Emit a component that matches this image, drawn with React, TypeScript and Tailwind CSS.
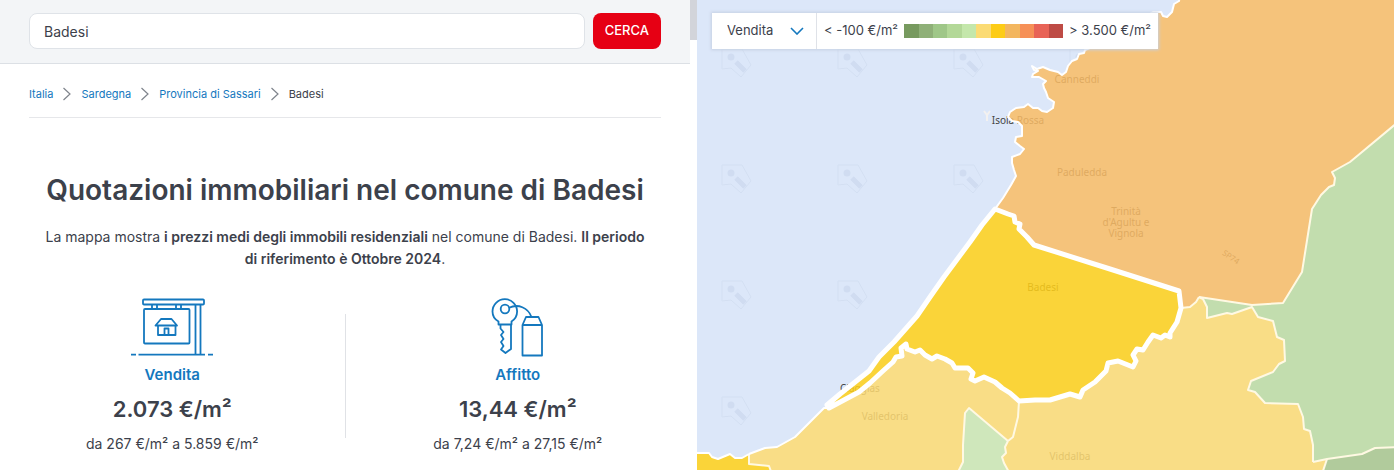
import { useState } from "react";
import type { FormEvent, ReactNode } from "react";

// Shared borders, as "x,y" points in map units
const TRINITA_COAST =
  "1180,-4 1179,1 1174,4 1172,12 1167,17 1163,16 1161,12 1153,12 1140,20 1120,32 1100,44 1085,50 1084,53 1079,54 1077,59 1072,61 1068,66 1066,72 1062,75 1058,72 1050,70 1043,67 1037,69 1032,66 1034,70 1038,71 1033,74 1032,77 1039,77 1046,81 1043,84 1044,88 1046,92 1048,98 1054,102 1053,108 1047,112 1042,111 1038,108 1033,108 1028,104 1024,107 1016,108 1010,112 1008,117 1012,121 1018,122 1022,126 1022,136 1016,137 1015,142 1020,146 1024,149 1020,154 1012,157 1012,163 1014,170 1016,176 1011,185 1003,198 995,209";
const BADESI_NORTH =
  "995,209 1008,214 1014,216 1015,222 1020,224 1019,229 1027,237 1034,245 1110,269 1179,291 1181,308";
const BADESI_EAST =
  "1181,308 1177,322 1170,333 1170,337 1165,335 1161,338 1153,335 1148,342 1143,350 1137,349 1133,355 1136,361 1133,367 1118,361 1108,363 1106,371 1095,382 1083,390 1080,397 1070,394 1050,400 1035,400 1019,401";
const BADESI_SOUTH =
  "1019,401 1010,393 1002,388 995,382 984,377 975,381 971,379 973,373 968,368 955,368 952,363 945,359 937,356 932,359 925,355 920,350 915,352 907,349 906,344 901,348 902,356 896,357 893,362 884,370 870,383 859,392 829,408";
const BADESI_COAST =
  "829,408 827,405 840,394 869,371 879,357 894,342 917,316 930,297 944,277 970,242 982,225 995,209";
const VALLEDORIA_COAST = "829,408 824,408 795,437 777,447 765,448 749,454";
const VALLEDORIA_WEST = "749,454 749,464 769,466 772,474";
const WEST_COAST = "693,453 709,453 712,457 718,459 730,454 735,458 742,458 749,454";
const VALLEDORIA_EAST = "1019,401 1018,417 1013,437 1008,441";
const SANTA_MARIA_EAST = "1008,441 1005,447 1006,453 1002,457 1004,463 1010,474";
const SANTA_MARIA_NORTH = "957,474 963,462 963,445 965,413 969,408 1008,441";
const TRINITA_SOUTH = "1181,308 1190,307 1196,302 1199,297";
const TRINITA_EAST =
  "1199,297 1252,305 1283,303 1302,272 1312,209 1321,195 1329,187 1334,185 1335,178 1332,172 1350,162 1398,122";
const VIDDALBA_EAST =
  "1199,297 1203,299 1207,307 1207,318 1227,313 1232,314 1252,307 1258,317 1273,321 1277,337 1284,340 1285,361 1279,364 1273,372 1251,381 1248,390 1255,392 1265,403 1298,404 1303,417 1304,429 1310,431 1313,445 1313,462";
const AGGIUS_SOUTH = "1313,462 1327,459 1362,454 1375,448 1398,447";

const reverse = (points: string) => points.split(" ").reverse().join(" ");

const regions = [
  {
    name: "Trinità d'Agultu e Vignola",
    fill: "#f9bc65",
    points: [TRINITA_COAST, BADESI_NORTH, TRINITA_SOUTH, TRINITA_EAST, "1398,-4"],
  },
  {
    name: "Aggius",
    fill: "#bddaa1",
    points: [reverse(TRINITA_EAST), VIDDALBA_EAST, AGGIUS_SOUTH],
  },
  {
    name: "Viddalba",
    fill: "#fedb72",
    points: [
      reverse(TRINITA_SOUTH),
      BADESI_EAST,
      VALLEDORIA_EAST,
      SANTA_MARIA_EAST,
      "1322,474 1327,459",
      reverse(VIDDALBA_EAST),
    ],
  },
  {
    name: "Valledoria",
    fill: "#fedb72",
    points: [
      BADESI_SOUTH,
      VALLEDORIA_COAST,
      VALLEDORIA_WEST,
      SANTA_MARIA_NORTH,
      reverse(VALLEDORIA_EAST),
    ],
  },
  {
    name: "Santa Maria Coghinas",
    fill: "#cde6b0",
    points: [SANTA_MARIA_NORTH, SANTA_MARIA_EAST],
  },
  {
    name: "Castelsardo",
    fill: "#ffd018",
    points: [WEST_COAST, VALLEDORIA_WEST, "693,474"],
  },
  {
    name: "Bortigiadas",
    fill: "#a9c68c",
    points: ["1322,474 1327,459 1362,454 1375,448 1398,447 1398,474"],
  },
  {
    name: "Badesi",
    fill: "#ffd018",
    points: [BADESI_NORTH, BADESI_EAST, BADESI_SOUTH, BADESI_COAST],
  },
];

const innerBorders = [
  TRINITA_SOUTH,
  TRINITA_EAST,
  VIDDALBA_EAST,
  AGGIUS_SOUTH,
  VALLEDORIA_EAST,
  SANTA_MARIA_EAST,
  SANTA_MARIA_NORTH,
  VALLEDORIA_WEST,
  "1327,459 1322,474",
];

const places = [
  { name: "Canneddi", x: 1077, y: 83 },
  { name: "Isola Rossa", x: 1018, y: 124 },
  { name: "Paduledda", x: 1082, y: 176 },
  { name: "Trinità", x: 1126, y: 215 },
  { name: "d'Agultu e", x: 1126, y: 226 },
  { name: "Vignola", x: 1126, y: 237 },
  { name: "Badesi", x: 1043, y: 291 },
  { name: "Ciaggias", x: 860, y: 392 },
  { name: "Valledoria", x: 885, y: 420 },
  { name: "Viddalba", x: 1070, y: 460 },
];

const legendColors = [
  "bg-[#779a5f]",
  "bg-[#8fb078]",
  "bg-[#9fc788]",
  "bg-[#b3d898]",
  "bg-[#c4e7ab]",
  "bg-[#fbdb74]",
  "bg-[#fdcc16]",
  "bg-[#f3b65f]",
  "bg-[#f69057]",
  "bg-[#e86357]",
  "bg-[#be4b45]",
];

const crumbs = ["Italia", "Sardegna", "Provincia di Sassari"];

function SaleIcon() {
  return (
    <svg
      className="h-[60px] w-[84px]"
      viewBox="0 0 84 60"
      fill="none"
      stroke="#1478be"
      strokeWidth="1.8"
      strokeLinejoin="round"
      aria-hidden="true"
    >
      <rect x="13" y="1.5" width="61" height="5" rx="1" />
      <path d="M22 6.5v4.5M27 6.5v4.5M46 6.5v4.5M51 6.5v4.5M65.500 6.500v50M70.500 6.500v50" />
      <rect x="14" y="11" width="45.500" height="34.500" rx="1" />
      <path d="M25.500 27.500l5.500-6.500h10.500l5.500 6.500zM28 27.500v9.500h17.500v-9.500M34.500 37v-6.500h4V37" />
      <path d="M1 56.700h5M8.500 56.700h66.500M78 56.700h5" />
    </svg>
  );
}

function RentIcon() {
  return (
    <svg
      className="h-[60px] w-[54px]"
      viewBox="0 0 54 60"
      fill="none"
      stroke="#1478be"
      strokeWidth="1.8"
      strokeLinejoin="round"
      aria-hidden="true"
    >
      <path d="M7.500 26.500v-3C4 21.500 1.500 18 1.500 13.500a12.300 12.300 0 0 1 24.600 0c0 4.500-2.500 8-5.600 10v3z" />
      <circle cx="14" cy="11" r="4.300" />
      <path d="M18 9.800C27 5.500 37 9.500 40.500 19" />
      <path d="M9.500 26.500v4l3 3.500-2.500 3 2.500 4-2.500 3 2.500 4-2.500 3.500 4.500 3.500 5.500-4V26.500" />
      <path d="M31.500 27l3.500-8h12.500l3.500 8v30.500H31.500zM31.500 27H51" />
    </svg>
  );
}

function Breadcrumbs() {
  return (
    <nav aria-label="breadcrumb" className="border-b border-[#e6e7ea] pt-5 pb-[13px]">
      <ol className="flex items-center text-[11px] leading-5">
        {crumbs.map((crumb) => (
          <li key={crumb} className="flex items-center">
            <a href="#" className="text-[#1478be]">
              {crumb}
            </a>
            <svg
              className="mx-2.5 h-3.5 w-2"
              viewBox="0 0 8 14"
              fill="none"
              stroke="#7f848c"
              strokeWidth="1.2"
              aria-hidden="true"
            >
              <path d="M.5 1l6.500 6-6.500 6" />
            </svg>
          </li>
        ))}
        <li aria-current="page">Badesi</li>
      </ol>
    </nav>
  );
}

interface PriceCardProps {
  icon: ReactNode;
  label: string;
  price: string;
  range: string;
}

function PriceCard({ icon, label, price, range }: PriceCardProps) {
  return (
    <div className="flex flex-1 flex-col items-center">
      {icon}
      <a href="#" className="mt-[5px] text-[15px] leading-6 font-semibold text-[#1478be]">
        {label}
      </a>
      <p className="mt-1.5 text-[22px] leading-8 font-semibold">{price}</p>
      <p className="mt-[7px] text-sm leading-6">{range}</p>
    </div>
  );
}

function PriceMap() {
  return (
    <svg
      className="absolute inset-0 h-full w-full"
      viewBox="697 0 697 470"
      preserveAspectRatio="xMidYMid slice"
      role="img"
      aria-label="Mappa dei prezzi"
    >
      <defs>
        <pattern id="watermark" x="721" y="48" width="116" height="116" patternUnits="userSpaceOnUse">
          <path d="M1 1h20l9 16-10 12-10-9-9 1z" fill="none" stroke="#d3dff2" />
          <circle cx="10" cy="9" r="3.500" fill="#d0dcf1" />
          <path d="M15 14l9 9" stroke="#d0dcf1" strokeWidth="5" />
        </pattern>
      </defs>
      <rect x="697" y="0" width="697" height="470" fill="#dce7f9" />
      <rect x="697" y="0" width="697" height="470" fill="url(#watermark)" />
      <path d="M984 111l3 4 3-4M987 115v6" fill="none" stroke="#f3f1f0" strokeWidth="2" />

      {/* Plain land, so the watermark only shows on the sea */}
      {regions.map(({ name, points }) => (
        <polygon key={name} points={points.join(" ")} fill="#dce7f9" />
      ))}

      <g className="font-['Noto_Sans',sans-serif] text-[10px]" fill="#444444" textAnchor="middle">
        {places.map(({ name, x, y }) => (
          <text key={name} x={x} y={y}>
            {name}
          </text>
        ))}
        <text x="1231" y="260" className="text-[8px]" transform="rotate(34 1231 257)">
          SP74
        </text>
      </g>

      {regions.map(({ name, fill, points }) => (
        <polygon key={name} points={points.join(" ")} fill={fill} fillOpacity="0.85" />
      ))}

      <g fill="none" strokeLinejoin="round">
        {innerBorders.map((points) => (
          <polyline key={points} points={points} stroke="#fff9e3" strokeWidth="2" />
        ))}
        {[TRINITA_COAST, VALLEDORIA_COAST, WEST_COAST].map((points) => (
          <polyline key={points} points={points} stroke="#ffffff" strokeWidth="2" />
        ))}
        <polygon
          points={[BADESI_NORTH, BADESI_EAST, BADESI_SOUTH, BADESI_COAST].join(" ")}
          stroke="#ffffff"
          strokeWidth="5"
        />
      </g>
    </svg>
  );
}

function MapLegend() {
  return (
    <div className="absolute top-[13px] left-[15px] flex h-9 items-center bg-white text-[13px] shadow-[0_0_3px_1px_#c6d0e2]">
      <div className="relative h-full border-r border-[#dfe2e8]">
        <select
          aria-label="Contratto"
          className="h-full w-[104px] cursor-pointer appearance-none bg-transparent pl-[15px]"
        >
          <option>Vendita</option>
          <option>Affitto</option>
        </select>
        <svg
          className="pointer-events-none absolute top-3.5 right-3 h-2 w-3.5"
          viewBox="0 0 14 8"
          fill="none"
          stroke="#1478be"
          strokeWidth="1.6"
          aria-hidden="true"
        >
          <path d="M1 1l6 6 6-6" />
        </svg>
      </div>
      <div className="flex items-center gap-1.5 px-[7px] whitespace-nowrap">
        <span>&lt; -100 €/m²</span>
        <div className="flex h-3.5 w-[159px]">
          {legendColors.map((color) => (
            <span key={color} className={`flex-1 ${color}`} />
          ))}
        </div>
        <span>&gt; 3.500 €/m²</span>
      </div>
    </div>
  );
}

function App() {
  const [search, setSearch] = useState("Badesi");

  const handleSubmit = (e: FormEvent) => {
    e.preventDefault();
  };

  return (
    <div className="flex min-h-screen bg-white font-[Inter,sans-serif] text-[#3c414b]">
      <div className="flex w-1/2">
        <main className="min-w-0 flex-1">
          <form
            onSubmit={handleSubmit}
            className="flex gap-2 border-b border-[#dce0e5] bg-[#f3f5f7] px-[29px] pt-[13px] pb-3.5"
          >
            <input
              type="text"
              aria-label="Cerca comune"
              value={search}
              onChange={(e) => setSearch(e.target.value)}
              className="h-9 min-w-0 flex-1 rounded-lg border border-[#dfe3e8] bg-white px-3.5 text-sm"
            />
            <button
              type="submit"
              className="h-9 rounded-lg bg-[#e60014] px-3 text-[13px] font-medium text-white"
            >
              CERCA
            </button>
          </form>

          <div className="px-[29px]">
            <Breadcrumbs />
            <h1 className="mt-[52px] text-center text-[28px] leading-10 font-semibold">
              Quotazioni immobiliari nel comune di Badesi
            </h1>
            <p className="mt-4 px-3 text-center text-sm leading-[22px]">
              La mappa mostra{" "}
              <strong className="font-semibold">i prezzi medi degli immobili residenziali</strong>{" "}
              nel comune di Badesi.{" "}
              <strong className="font-semibold">Il periodo di riferimento è Ottobre 2024</strong>.
            </p>
          </div>

          <div className="mt-7 flex">
            <PriceCard
              icon={<SaleIcon />}
              label="Vendita"
              price="2.073 €/m²"
              range="da 267 €/m² a 5.859 €/m²"
            />
            <div className="mt-4 mb-[18px] w-px bg-[#e0e2e6]" />
            <PriceCard
              icon={<RentIcon />}
              label="Affitto"
              price="13,44 €/m²"
              range="da 7,24 €/m² a 27,15 €/m²"
            />
          </div>
        </main>
        <div className="w-[7px] bg-white">
          <div className="h-10 bg-[#d2d4da]" />
        </div>
      </div>

      <section className="relative w-1/2 overflow-hidden">
        <PriceMap />
        <MapLegend />
      </section>
    </div>
  );
}

export default App;
